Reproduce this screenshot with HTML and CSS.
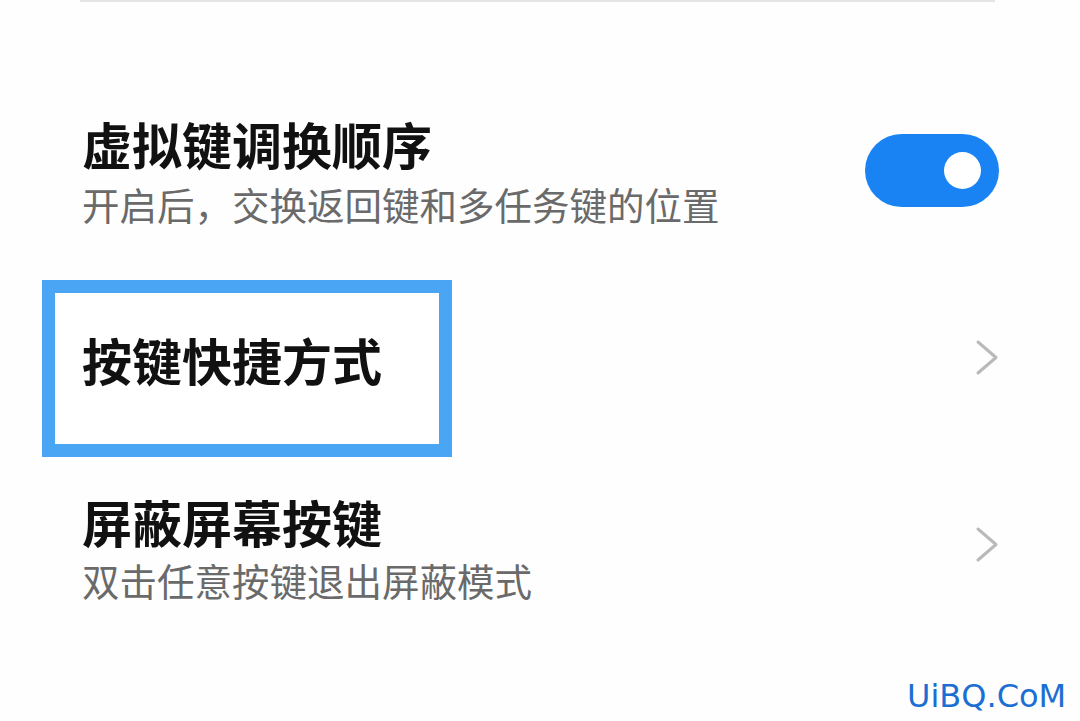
FILE: index.html
```html
<!DOCTYPE html>
<html lang="zh-CN">
<head>
<meta charset="utf-8">
<link rel="stylesheet" href="styles.css">
</head>
<body>
<div class="page">
  <div class="divider"></div>

  <div class="row row-toggle">
    <div class="text">
      <div class="title">虚拟键调换顺序</div>
      <div class="sub">开启后，交换返回键和多任务键的位置</div>
    </div>
    <div class="toggle"><span class="knob"></span></div>
  </div>

  <div class="row row-boxed">
    <div class="highlight">
      <div class="title">按键快捷方式</div>
    </div>
    <svg class="chevron chev-boxed" width="24" height="40" viewBox="0 0 24 40"><polyline points="3,4 21,19.5 3,35" fill="none" stroke="#b9b9b9" stroke-width="3" stroke-linecap="round" stroke-linejoin="round"/></svg>
  </div>

  <div class="row row-last">
    <div class="text">
      <div class="title">屏蔽屏幕按键</div>
      <div class="sub">双击任意按键退出屏蔽模式</div>
    </div>
    <svg class="chevron chev-last" width="24" height="40" viewBox="0 0 24 40"><polyline points="3,4 21,19.5 3,35" fill="none" stroke="#b9b9b9" stroke-width="3" stroke-linecap="round" stroke-linejoin="round"/></svg>
  </div>

  <div class="watermark">UiBQ.CoM</div>
</div>
</body>
</html>
```

FILE: styles.css
```css
html, body {
  margin: 0;
  padding: 0;
  background: #fefefe;
}
.page {
  position: relative;
  width: 1080px;
  height: 721px;
  overflow: hidden;
  font-family: "Noto Sans CJK SC", "Noto Sans", sans-serif;
}
.divider {
  height: 2px;
  background: #e4e4e4;
  margin-left: 80px;
  width: 915px;
}
.row {
  display: flex;
  justify-content: space-between;
  padding-right: 81px;
}
.row-toggle {
  margin-top: 111px;
  padding-left: 82px;
  align-items: center;
}
.title {
  font-size: 50px;
  line-height: 60px;
  font-weight: 700;
  color: #111111;
}
.sub {
  font-size: 37.5px;
  line-height: 46px;
  color: #6a6a6a;
  margin-top: 8px;
}
.toggle {
  position: relative;
  width: 134px;
  height: 73px;
  border-radius: 37px;
  background: #1a83f4;
}
.knob {
  position: absolute;
  right: 18px;
  top: 18px;
  width: 37px;
  height: 37px;
  border-radius: 50%;
  background: #ffffff;
}
.row-boxed {
  margin-top: 53px;
  padding-left: 42px;
  align-items: flex-start;
}
.highlight {
  box-sizing: border-box;
  width: 410px;
  height: 177px;
  border: 13px solid #4aa6f4;
  background: #ffffff;
  padding: 36px 0 0 27px;
}
.chev-boxed {
  margin-top: 58px;
}
.row-last {
  margin-top: 34px;
  padding-left: 82px;
  align-items: flex-start;
}
.row-last .sub {
  margin-top: 6px;
}
.chev-last {
  margin-top: 34px;
}
.watermark {
  position: absolute;
  left: 907px;
  top: 676px;
  font-family: "DejaVu Sans", sans-serif;
  font-size: 32px;
  line-height: 40px;
  color: #1b6fd2;
}
```
